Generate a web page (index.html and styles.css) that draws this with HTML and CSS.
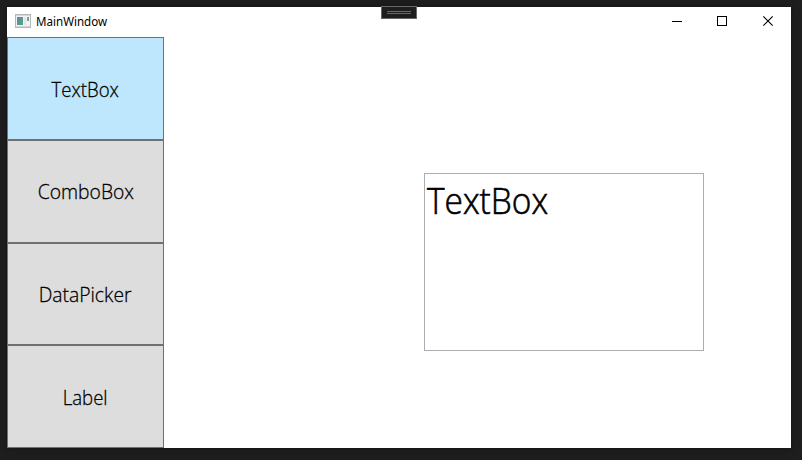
FILE: index.html
```html
<!DOCTYPE html>
<html lang="en">
<head>
<meta charset="utf-8">
<title>MainWindow</title>
<link rel="stylesheet" href="styles.css">
</head>
<body>
<div class="window">
  <header class="titlebar">
    <svg class="app-icon" width="16" height="14" viewBox="0 0 16 14">
      <defs><linearGradient id="pane" x1="0" y1="0" x2="1" y2="1"><stop offset="0" stop-color="#5b86b0"/><stop offset="1" stop-color="#5aa878"/></linearGradient></defs>
      <rect x=".5" y=".5" width="15" height="12.5" fill="#f2f3f4" stroke="#b4b7bc"/>
      <path d="M1 1.5h14" stroke="#d4d6da"/>
      <rect x="2" y="3" width="6" height="8" fill="url(#pane)"/>
      <rect x="9" y="3" width="2" height="8" fill="#e2e5e6"/>
      <rect x="12" y="3" width="2" height="4" fill="#6fa58d"/>
      <path d="M0 13.5h16" stroke="#b4b7bc"/>
    </svg>
    <span class="title">MainWindow</span>
    <div class="controls">
      <svg width="46" height="30"><path d="M18 14.5h10" stroke="#000"/></svg>
      <svg width="46" height="30"><rect x="17.5" y="9.5" width="9" height="9" fill="none" stroke="#000"/></svg>
      <svg width="46" height="30"><path d="M17.3 9.3l9.4 9.4M26.7 9.3l-9.4 9.4" stroke="#000" stroke-width="1.1"/></svg>
    </div>
    <div class="grip"></div>
  </header>
  <main class="content">
    <nav class="sidebar">
      <button class="tool selected"><span>TextBox</span></button>
      <button class="tool raised"><span>ComboBox</span></button>
      <button class="tool raised"><span>DataPicker</span></button>
      <button class="tool"><span>Label</span></button>
    </nav>
    <section class="canvas">
      <div class="textbox"><span>TextBox</span></div>
    </section>
  </main>
</div>
</body>
</html>
```
FILE: styles.css
```css
* { box-sizing: border-box; }
body {
  margin: 0;
  height: 460px;
  padding: 7px 11px 12px 7px;
  background: #1e1e1e;
  overflow: hidden;
  font-family: "Open Sans", "Noto Sans", sans-serif;
  color: #000;
}
.window {
  height: 441px;
  background: #fff;
  display: flex;
  flex-direction: column;
  box-shadow: 0 0 6px #141414;
}
.titlebar {
  position: relative;
  height: 30px;
  display: flex;
  align-items: center;
  padding-left: 8px;
}
.app-icon { margin-right: 5px; margin-top: -2px; }
.title {
  font-family: "Noto Sans", sans-serif;
  font-size: 12px;
  line-height: 16px;
  transform: scaleX(.965);
  transform-origin: left;
}
.controls { margin-left: auto; display: flex; margin-right: -1px; }
.controls svg { display: block; }
.grip {
  position: absolute;
  left: 374px;
  top: -1px;
  width: 36px;
  height: 13px;
  border: 1px solid #686868;
  background: #1e1e1e;
}
.grip::before {
  content: "";
  display: block;
  margin: 4px 5px 0;
  height: 1px;
  border: solid #686868;
  border-width: 1px 0;
}
.content { flex: 1; display: flex; }
.sidebar {
  width: 157px;
  display: grid;
  grid-template-rows: 103px 103px 102px 103px;
}
.tool {
  display: flex;
  align-items: center;
  justify-content: center;
  padding: 3px 0 0;
  border: 1px solid #707070;
  background: #ddd;
  color: #000;
  font: 300 20px/26px "Open Sans", "Noto Sans", sans-serif;
  -webkit-text-stroke: .3px #000;
}
.tool span { display: block; transform: scaleX(.93); }
.raised { padding-top: 1px; }
.raised span { transform: scaleX(.965); }
.selected { background: #bee6fd; border-color: #3c7fb1; }
.canvas { flex: 1; padding: 136px 0 0 260px; }
.textbox {
  width: 280px;
  height: 178px;
  border: 1px solid #abadb3;
  padding: 3px 2px;
  font-size: 36px;
  font-weight: 300;
  line-height: 48px;
  -webkit-text-stroke: .6px #000;
}
.textbox span {
  display: inline-block;
  transform: scaleX(.93);
  transform-origin: left;
}
```
